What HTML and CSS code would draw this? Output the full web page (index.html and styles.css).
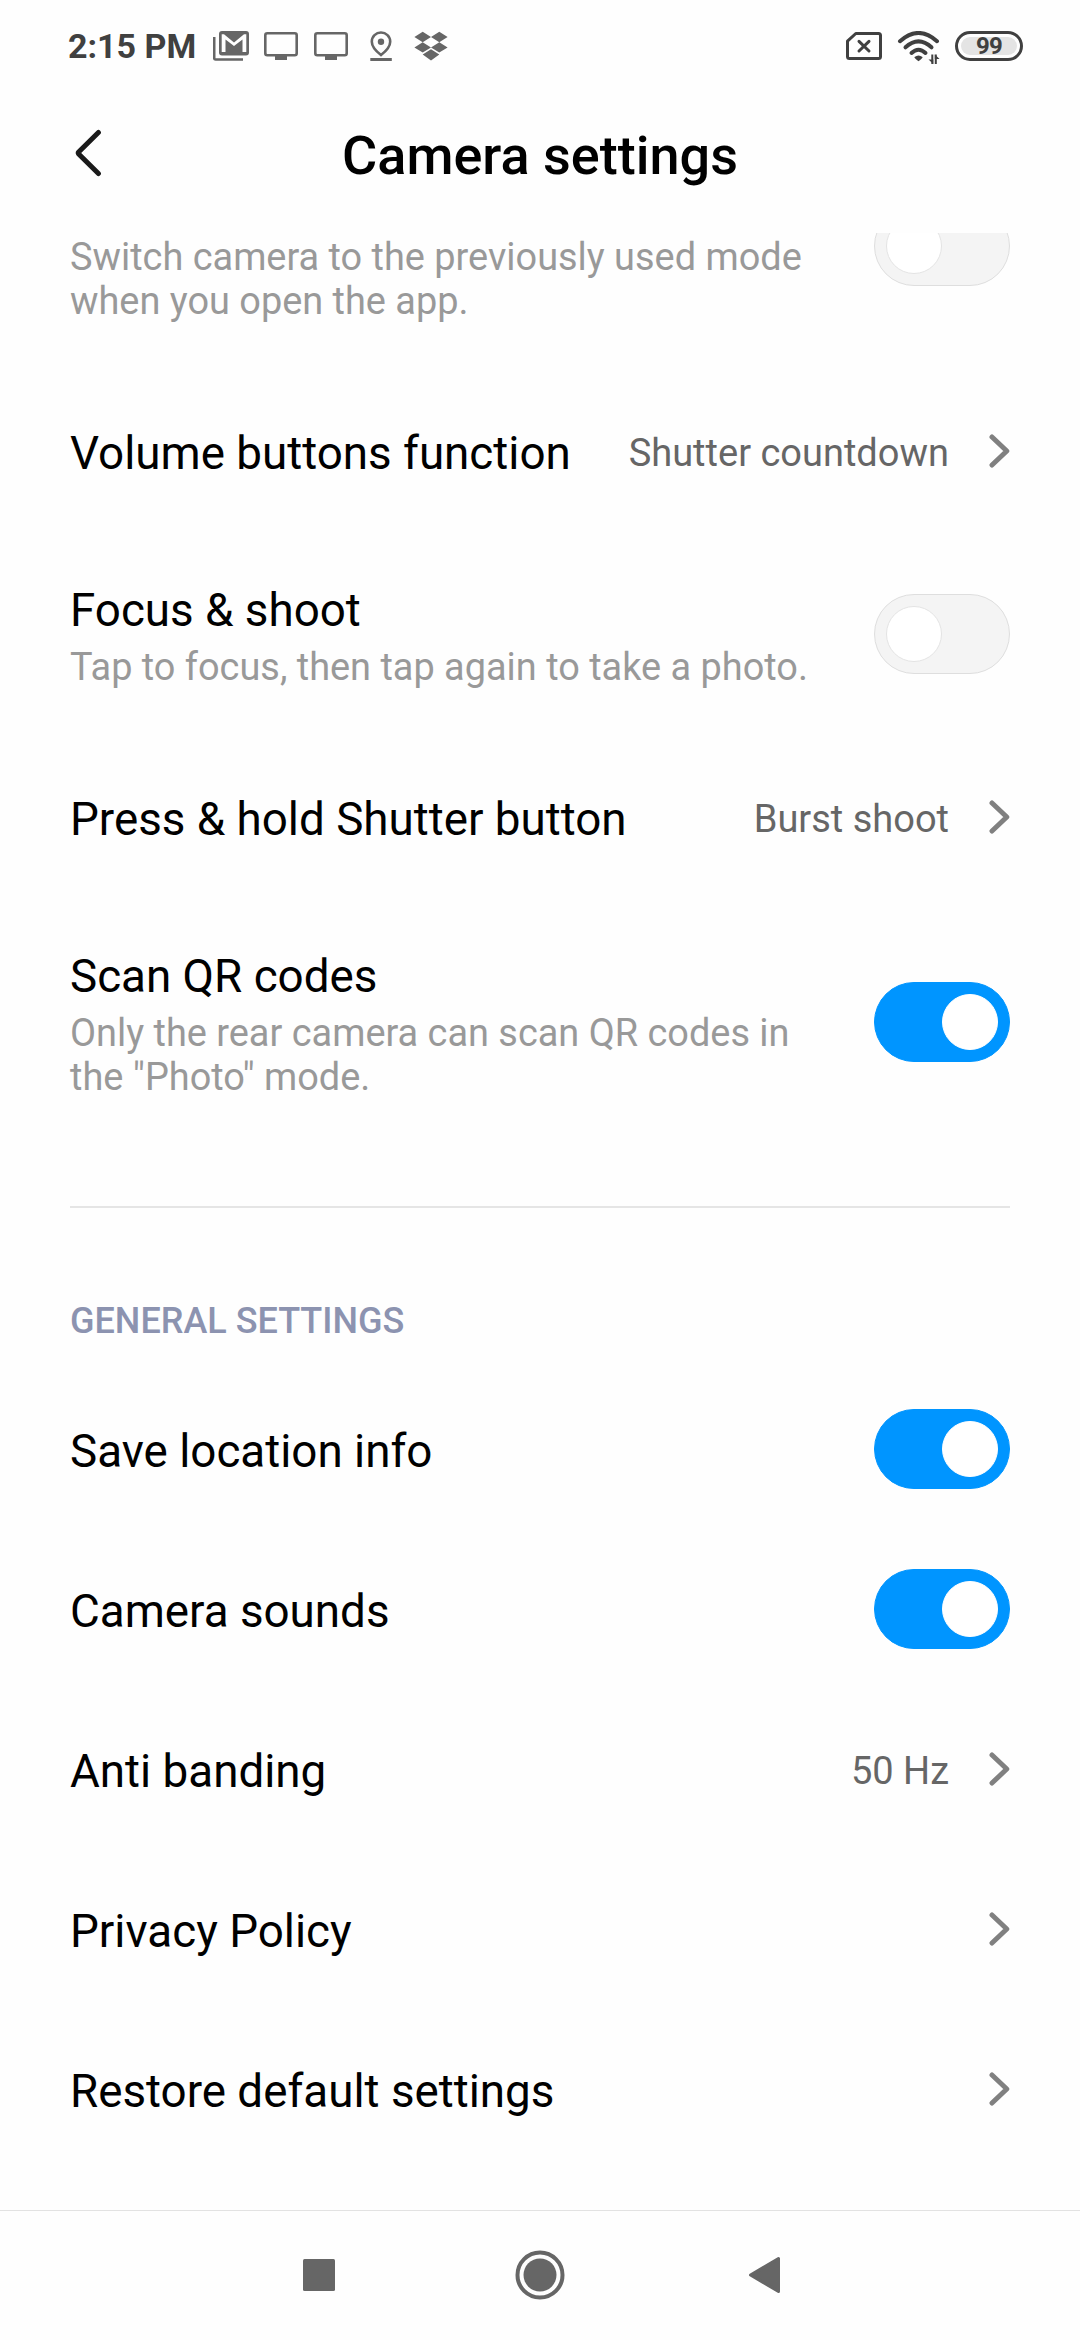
FILE: index.html
```html
<!DOCTYPE html>
<html lang="en">
<head>
<meta charset="utf-8">
<title>Camera settings</title>
<link rel="stylesheet" href="styles.css">
</head>
<body>
<div class="screen">
  <div class="status">
    <span class="time">2:15 PM</span>
    <svg class="ic-mail" width="36" height="30" viewBox="0 0 36 30"><path d="M1.200 6v21.200q0 1.300 1.300 1.300H30" fill="none" stroke="#666" stroke-width="2.600"/><rect x="6" y="0" width="30" height="24.500" rx="3" fill="#666"/><path d="M8.700 21V3.200h2.300L21 11.500 31 3.200h2.300V21h-3.800V8.500L21 15 12.500 8.500V21z" fill="#fefefe"/></svg>
    <svg class="ic-tv" width="34" height="28" viewBox="0 0 34 28"><rect x="1.300" y="1.300" width="31.400" height="22" rx="2" fill="none" stroke="#666" stroke-width="2.600"/><path d="M11 23h12v5H11z" fill="#666"/></svg>
    <svg class="ic-tv" width="34" height="28" viewBox="0 0 34 28"><rect x="1.300" y="1.300" width="31.400" height="22" rx="2" fill="none" stroke="#666" stroke-width="2.600"/><path d="M11 23h12v5H11z" fill="#666"/></svg>
    <svg class="ic-pin" width="22" height="30" viewBox="0 0 22 30"><path d="M11 1.500c5 0 9.200 4 9.200 9.200 0 4.700-4.700 9.800-9.200 13.300C6.500 20.500 1.800 15.400 1.800 10.700 1.800 5.500 6 1.500 11 1.500z" fill="none" stroke="#666" stroke-width="2.600"/><circle cx="11" cy="10.800" r="3.200" fill="#666"/><path d="M.3 27h21.500v3H.3z" fill="#666"/></svg>
    <svg class="ic-box" width="34" height="30" viewBox="0 0 34 30"><path d="M8.700.8 17 6 8.700 11.200.4 6zM25.300.8 33.600 6l-8.300 5.200L17 6zM8.700 11.200 17 16.400l-8.300 5.200L.4 16.400zM25.300 11.200l8.300 5.200-8.300 5.200-8.300-5.200zM17 18.300l8.300 5.200L17 29.400l-8.300-5.900z" fill="#666"/></svg>
    <span class="fill"></span>
    <svg class="ic-sim" width="36" height="28" viewBox="0 0 36 28"><path d="M9.800 1.500H32.500q2 0 2 2v21q0 2-2 2H3.500q-2 0-2-2V9.200z" fill="none" stroke="#404040" stroke-width="3" stroke-linejoin="round"/><path d="M13 9.300l10 9.700M23 9.300 13 19" stroke="#404040" stroke-width="3" stroke-linecap="round"/></svg>
    <svg class="ic-wifi" width="44" height="34" viewBox="0 0 44 34"><g fill="none" stroke="#404040" stroke-width="4" stroke-linecap="round"><path d="M3 10.200Q21.500-6.200 40 10.200"/><path d="M8.500 16.300Q21.500 4.500 34.500 16.300"/><path d="M14.500 22Q21.500 15.500 28.500 22"/></g><path d="M17.500 26q4-3 8 0 .5 1-4 4.300-4.500-3.300-4-4.300z" fill="#404040"/><path d="M35.300 23.500V33M38.800 33v-9.500" stroke="#404040" stroke-width="2"/><path d="M31.500 28.500h4.800V33zM42.600 28h-4.800v-4.500z" fill="#404040"/></svg>
    <span class="battery"><span class="level">99</span></span>
  </div>
  <header class="bar">
    <svg class="back" width="28" height="48" viewBox="0 0 28 48"><path d="M23.400 3.500 3.700 23a1.500 1.500 0 0 0 0 2L23.400 44.500" fill="none" stroke="#1a1a1a" stroke-width="5" stroke-linecap="round"/></svg>
    <h1 class="title">Camera settings</h1>
  </header>
  <main class="list">
    <div class="row first"><div class="sub">Switch camera to the previously used mode<br>when you open the app.</div><span class="toggle"><span class="knob"></span></span></div>
    <div class="row"><div class="label">Volume buttons function</div><div class="value">Shutter countdown</div><svg class="chev" width="21" height="34" viewBox="0 0 21 34"><path d="M3 3 17.800 17 3 31"/></svg></div>
    <div class="row mid"><div class="text"><div class="label">Focus &amp; shoot</div><div class="sub">Tap to focus, then tap again to take a photo.</div></div><span class="toggle"><span class="knob"></span></span></div>
    <div class="row"><div class="label">Press &amp; hold Shutter button</div><div class="value">Burst shoot</div><svg class="chev" width="21" height="34" viewBox="0 0 21 34"><path d="M3 3 17.800 17 3 31"/></svg></div>
    <div class="row tall"><div class="text"><div class="label">Scan QR codes</div><div class="sub">Only the rear camera can scan QR codes in<br>the "Photo" mode.</div></div><span class="toggle on"><span class="knob"></span></span></div>
    <div class="divider"></div>
    <h2 class="section">GENERAL SETTINGS</h2>
    <div class="row"><div class="label">Save location info</div><span class="toggle on"><span class="knob"></span></span></div>
    <div class="row"><div class="label">Camera sounds</div><span class="toggle on"><span class="knob"></span></span></div>
    <div class="row"><div class="label">Anti banding</div><div class="value">50 Hz</div><svg class="chev" width="21" height="34" viewBox="0 0 21 34"><path d="M3 3 17.800 17 3 31"/></svg></div>
    <div class="row"><div class="label">Privacy Policy</div><svg class="chev" width="21" height="34" viewBox="0 0 21 34"><path d="M3 3 17.800 17 3 31"/></svg></div>
    <div class="row"><div class="label">Restore default settings</div><svg class="chev" width="21" height="34" viewBox="0 0 21 34"><path d="M3 3 17.800 17 3 31"/></svg></div>
  </main>
  <nav class="nav">
    <svg width="32" height="32" viewBox="0 0 32 32"><rect width="32" height="32" rx="1.500" fill="#666"/></svg>
    <svg width="50" height="50" viewBox="0 0 50 50"><circle cx="25" cy="25" r="22.500" fill="none" stroke="#666" stroke-width="4"/><circle cx="25" cy="25" r="16.500" fill="#666"/></svg>
    <svg width="36" height="38" viewBox="-4 0 36 38"><path d="M30.500 2.500v33L2.500 19z" fill="#666" stroke="#666" stroke-width="3" stroke-linejoin="round"/></svg>
  </nav>
</div>
</body>
</html>
```
FILE: styles.css
```css
* { box-sizing: border-box; }
body { margin: 0; background: #fefefe; font-family: Roboto, "Liberation Sans", sans-serif; }
svg { display: block; flex: none; }
.screen { width: 1080px; height: 2340px; display: flex; flex-direction: column; overflow: hidden; }
.status { height: 92px; padding: 0 57px 0 68px; display: flex; align-items: center; }
.time { font-size: 34px; font-weight: 700; color: #404040; white-space: nowrap; width: 145px; line-height: 40px; }
.ic-tv { margin-left: 15px; }
.ic-tv + .ic-tv { margin-left: 16px; }
.ic-pin { margin-left: 22px; }
.ic-box { margin-left: 22px; }
.fill { flex: 1; }
.ic-wifi { margin: 3px 14px 0 15px; }
.battery { width: 68px; height: 30px; border: 3px solid #404040; border-radius: 15px; padding: 3px; display: flex; }
.level { flex: 1; border-radius: 9px; background: #e4e4e4; color: #404040; font-size: 24px; font-weight: 700; letter-spacing: -0.7px; line-height: 19px; text-align: center; }
.bar { height: 141px; padding: 0 75px; display: grid; grid-template-columns: 28px 1fr 28px; align-items: center; }
.back { margin-top: -20px; }
.title { margin: -14px 0 0; font-size: 54px; font-weight: 500; line-height: 62px; text-align: center; color: #000; }
.list { height: 1977px; overflow: hidden; flex: none; }
.row { height: 160px; padding: 0 70px; display: flex; align-items: center; }
.mid { height: 206px; }
.tall { height: 250px; }
.label { flex: 1; font-size: 45.75px; line-height: 54px; color: #000; white-space: nowrap; padding-top: 6px; }
.text { flex: 1; padding-top: 3px; }
.text .label { padding: 1px 0 0; }
.sub { font-size: 37.9px; line-height: 44px; color: #999; white-space: nowrap; margin-top: 7px; }
.first { height: 138px; align-items: flex-start; justify-content: space-between; }
.first .sub { margin-top: 2px; }
.first .toggle { margin-top: -27px; }
.value { font-size: 38px; line-height: 44px; color: #666; padding-top: 4px; margin-right: 40px; white-space: nowrap; }
.chev path { fill: none; stroke: #808080; stroke-width: 5; stroke-linecap: round; stroke-linejoin: round; }
.toggle { width: 136px; height: 80px; border-radius: 40px; padding: 11px; border: 1px solid #dedede; background: #f4f4f4; display: flex; flex: none; }
.knob { width: 56px; height: 56px; border-radius: 50%; background: #fff; border: 1px solid #e4e4e4; }
.on { background: #0095ff; border-color: #0095ff; justify-content: flex-end; }
.on .knob { border-color: #fff; }
.divider { height: 2px; margin: 59px 70px 0; background: #e5e5e5; }
.section { margin: 0; height: 161px; padding: 92px 70px 0; font-size: 36px; font-weight: 500; line-height: 42px; color: #8c93b0; }
.nav { height: 130px; border-top: 1px solid #e2e2e2; display: flex; align-items: center; padding: 0 300px 1px 303px; justify-content: space-between; }
```
